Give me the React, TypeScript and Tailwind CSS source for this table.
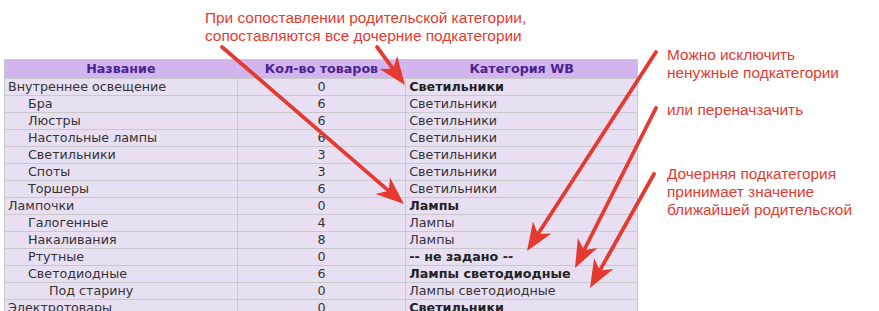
import React from 'react';

type Row = {
  name: string;
  level: number;
  count: number;
  category: string;
  bold?: boolean;
};

const rows: Row[] = [
  { name: 'Внутреннее освещение', level: 0, count: 0, category: 'Светильники', bold: true },
  { name: 'Бра', level: 1, count: 6, category: 'Светильники' },
  { name: 'Люстры', level: 1, count: 6, category: 'Светильники' },
  { name: 'Настольные лампы', level: 1, count: 6, category: 'Светильники' },
  { name: 'Светильники', level: 1, count: 3, category: 'Светильники' },
  { name: 'Споты', level: 1, count: 3, category: 'Светильники' },
  { name: 'Торшеры', level: 1, count: 6, category: 'Светильники' },
  { name: 'Лампочки', level: 0, count: 0, category: 'Лампы', bold: true },
  { name: 'Галогенные', level: 1, count: 4, category: 'Лампы' },
  { name: 'Накаливания', level: 1, count: 8, category: 'Лампы' },
  { name: 'Ртутные', level: 1, count: 0, category: '-- не задано --', bold: true },
  { name: 'Светодиодные', level: 1, count: 6, category: 'Лампы светодиодные', bold: true },
  { name: 'Под старину', level: 2, count: 0, category: 'Лампы светодиодные' },
  { name: 'Электротовары', level: 0, count: 0, category: 'Светильники', bold: true },
  { name: 'Удлинители', level: 1, count: 2, category: 'Светильники' },
];

const indent = ['pl-[3px]', 'pl-[23px]', 'pl-[44px]'];

// arrows: tail -> tip
const arrows = [
  { x1: 222, y1: 47, x2: 404, y2: 204 },
  { x1: 377, y1: 47, x2: 405, y2: 85 },
  { x1: 656, y1: 52, x2: 527, y2: 251 },
  { x1: 656, y1: 108, x2: 575, y2: 268 },
  { x1: 654, y1: 174, x2: 590, y2: 288 },
];

const Arrow = ({ x1, y1, x2, y2 }: { x1: number; y1: number; x2: number; y2: number }) => {
  const dx = x2 - x1;
  const dy = y2 - y1;
  const len = Math.hypot(dx, dy);
  const ux = dx / len;
  const uy = dy / len;
  const head = 28;
  const half = 11;
  const bx = x2 - ux * head;
  const by = y2 - uy * head;
  const nx = x2 - ux * head * 0.72;
  const ny = y2 - uy * head * 0.72;
  const p = `${x2},${y2} ${bx - uy * half},${by + ux * half} ${nx},${ny} ${bx + uy * half},${by - ux * half}`;
  return (
    <g>
      <line x1={x1} y1={y1} x2={nx} y2={ny} stroke="#e53a2f" strokeWidth={3.8} strokeLinecap="round" />
      <polygon points={p} fill="#e53a2f" />
    </g>
  );
};

export default function App() {
  return (
    <div className="relative w-[879px] h-[311px] overflow-hidden bg-white">
      <div className="pt-[59px] pl-[4px]">
        <table
          className="border-collapse text-[12.7px] leading-[16px] text-[#333] w-[634px]"
          style={{ fontFamily: '"DejaVu Sans", Verdana, sans-serif' }}
        >
          <colgroup>
            <col className="w-[233px]" />
            <col className="w-[169px]" />
            <col className="w-[232px]" />
          </colgroup>
          <thead>
            <tr className="bg-[#d1b5ec] text-[#4b2391]">
              <th className="border border-[#c9c9c9] h-[19px] font-bold text-center">Название</th>
              <th className="border border-[#c9c9c9] font-bold text-center">Кол-во товаров</th>
              <th className="border border-[#c9c9c9] font-bold text-center">Категория WB</th>
            </tr>
          </thead>
          <tbody>
            {rows.map((r, i) => (
              <tr key={i} className="bg-[#e8dff3]">
                <td className={`border border-[#c9c9c9] h-[17px] ${indent[r.level]} whitespace-nowrap`}>{r.name}</td>
                <td className="border border-[#c9c9c9] text-center">{r.count}</td>
                <td className={`border border-[#c9c9c9] pl-[3px] whitespace-nowrap ${r.bold ? 'font-bold text-[#222]' : ''}`}>
                  {r.category}
                </td>
              </tr>
            ))}
          </tbody>
        </table>
      </div>

      <div
        className="absolute inset-0 text-[15.4px] leading-[18px] text-[#e53a2f]"
        style={{ fontFamily: '"Liberation Sans", Arial, sans-serif' }}
      >
        <div className="absolute left-[205px] top-[9px]">
          При сопоставлении родительской категории,
          <br />
          сопоставляются все дочерние подкатегории
        </div>
        <div className="absolute left-[667px] top-[46px]">
          Можно исключить
          <br />
          ненужные подкатегории
        </div>
        <div className="absolute left-[667px] top-[101px]">или переначзачить</div>
        <div className="absolute left-[667px] top-[165px]">
          Дочерняя подкатегория
          <br />
          принимает значение
          <br />
          ближайшей родительской
        </div>
      </div>

      <svg className="absolute inset-0 pointer-events-none" width={879} height={311}>
        {arrows.map((a, i) => (
          <Arrow key={i} {...a} />
        ))}
      </svg>
    </div>
  );
}
